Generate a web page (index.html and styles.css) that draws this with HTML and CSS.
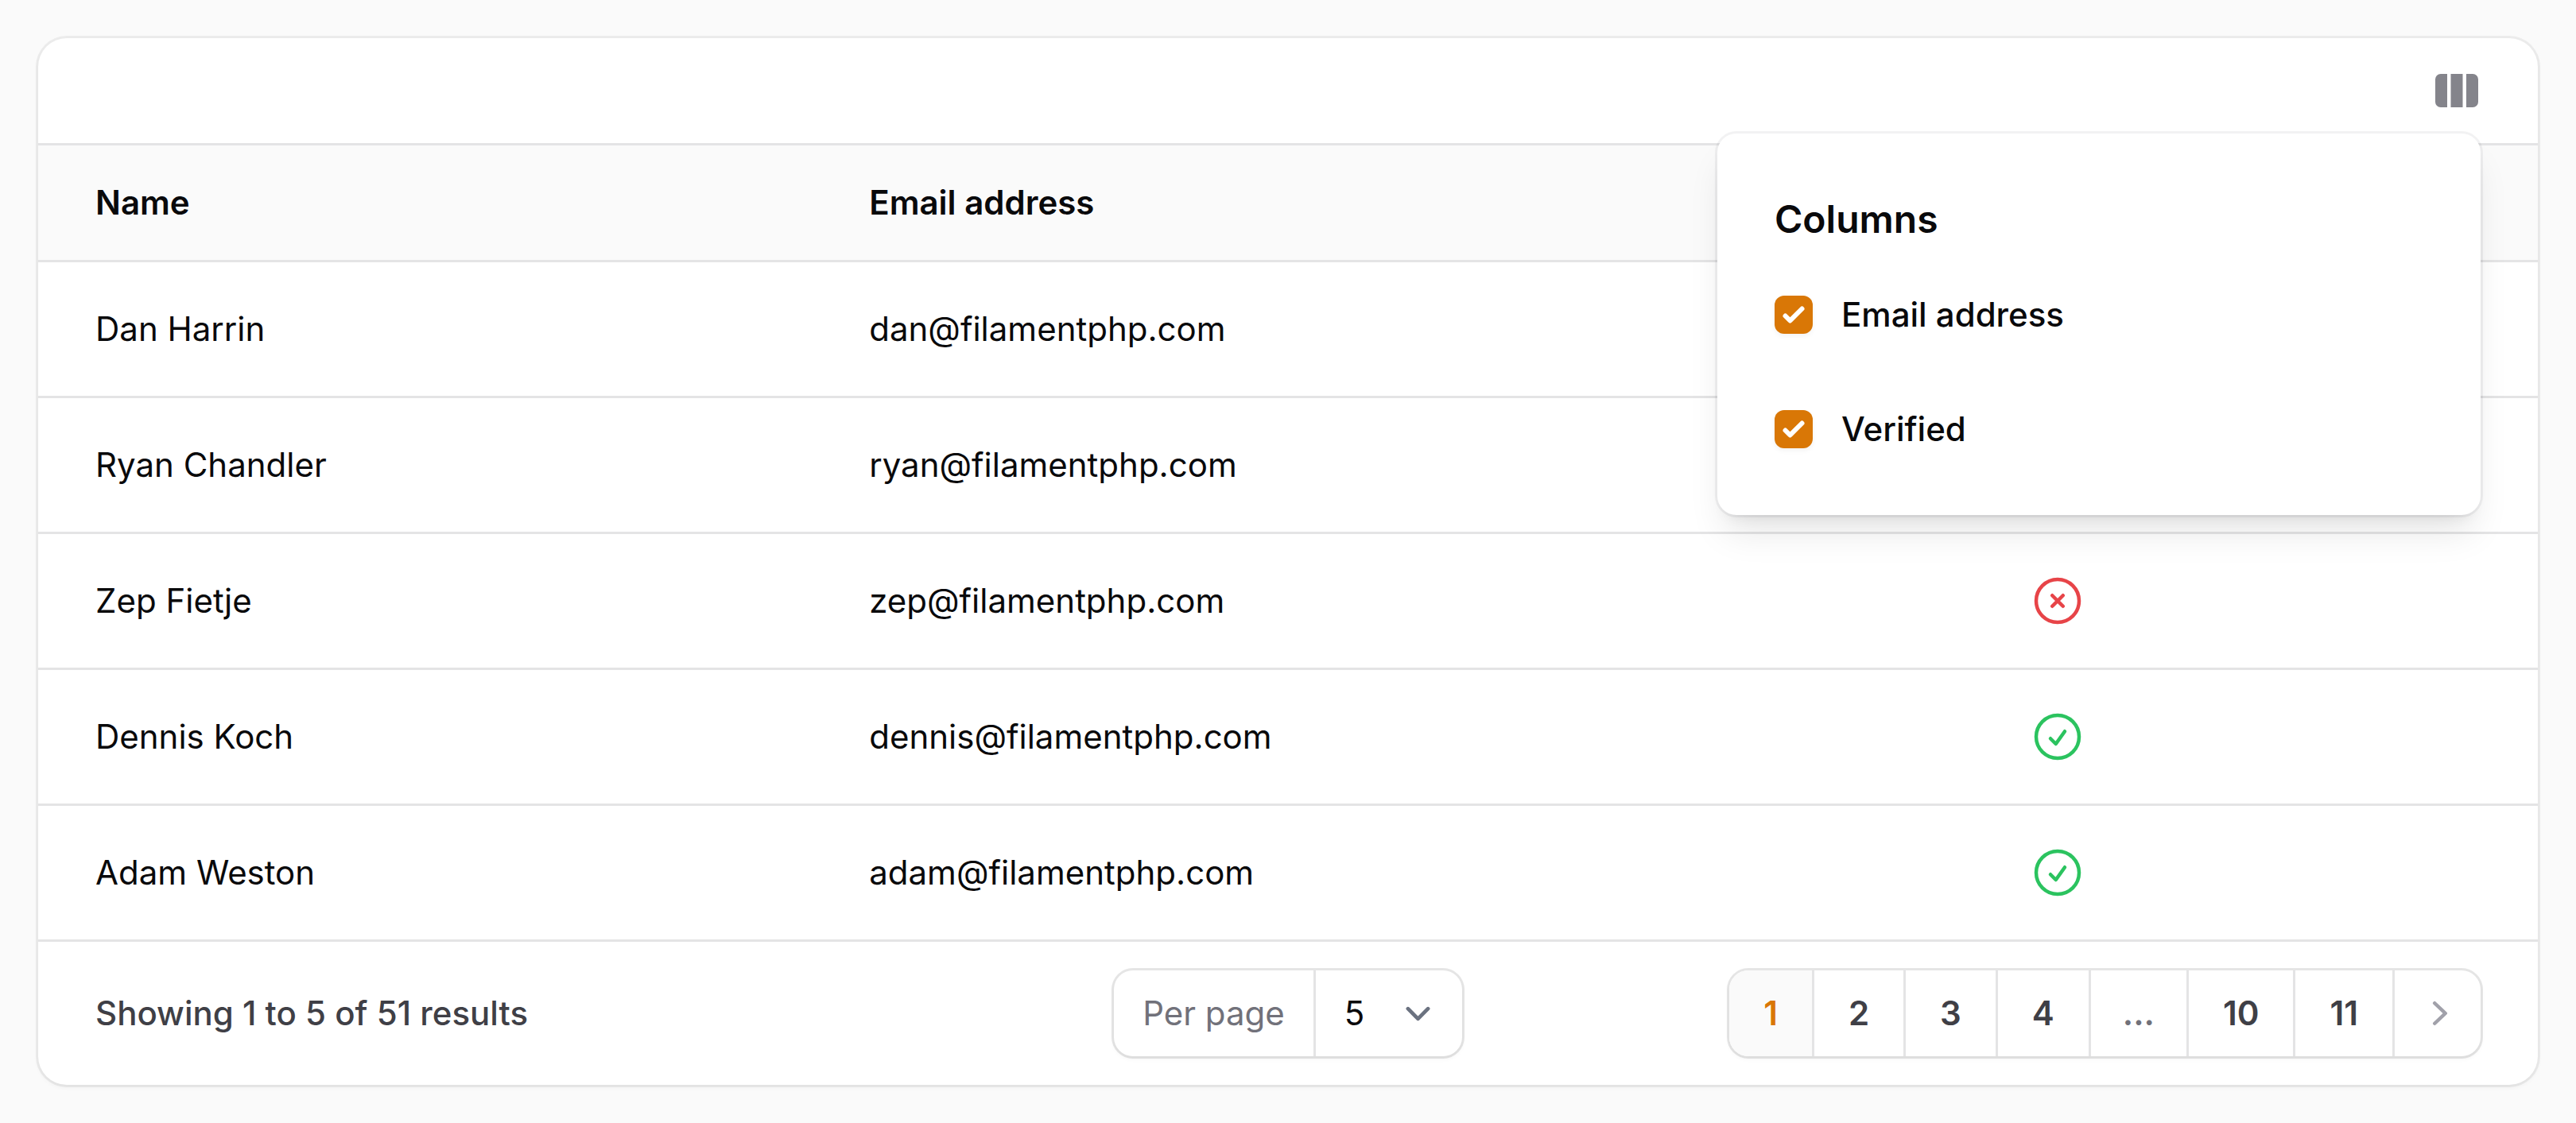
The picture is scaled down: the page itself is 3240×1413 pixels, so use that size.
FILE: index.html
```html
<!DOCTYPE html>
<html lang="en">
<head>
<meta charset="utf-8">
<meta name="viewport" content="width=device-width, initial-scale=1">
<title>Users</title>
<link rel="stylesheet" href="styles.css">
</head>
<body>
<svg class="sprite" aria-hidden="true">
  <symbol id="icon-check-circle" viewBox="0 0 24 24" fill="none" stroke="currentColor" stroke-width="1.5" stroke-linecap="round" stroke-linejoin="round">
    <path d="M9 12.75 11.25 15 15 9.75M21 12a9 9 0 1 1-18 0 9 9 0 0 1 18 0Z"/>
  </symbol>
  <symbol id="icon-x-circle" viewBox="0 0 24 24" fill="none" stroke="currentColor" stroke-width="1.5" stroke-linecap="round" stroke-linejoin="round">
    <path d="m9.75 9.75 4.5 4.5m0-4.5-4.5 4.5M21 12a9 9 0 1 1-18 0 9 9 0 0 1 18 0Z"/>
  </symbol>
</svg>

<main class="card">
  <div class="toolbar">
    <div class="dropdown">
      <button class="icon-button" type="button" aria-label="Toggle columns" aria-expanded="true">
        <svg viewBox="0 0 20 20" fill="currentColor" aria-hidden="true">
          <path d="M14 17h2.75A2.25 2.25 0 0 0 19 14.75v-9.5A2.25 2.25 0 0 0 16.75 3H14v14ZM12.5 3h-5v14h5V3ZM3.25 3H6v14H3.25A2.25 2.25 0 0 1 1 14.75v-9.5A2.25 2.25 0 0 1 3.25 3Z"/>
        </svg>
      </button>
      <div class="panel">
        <h2 class="panel-title">Columns</h2>
        <div class="panel-options">
          <label class="option"><input class="checkbox" type="checkbox" checked>Email address</label>
          <label class="option"><input class="checkbox" type="checkbox" checked>Verified</label>
        </div>
      </div>
    </div>
  </div>

  <table class="table">
    <thead>
      <tr><th class="col-name" scope="col">Name</th><th class="col-email" scope="col">Email address</th><th class="col-status" scope="col">Verified</th></tr>
    </thead>
    <tbody>
      <tr><td>Dan Harrin</td><td>dan@filamentphp.com</td><td class="col-status"><svg class="status yes" role="img" aria-label="Yes"><use href="#icon-check-circle"/></svg></td></tr>
      <tr><td>Ryan Chandler</td><td>ryan@filamentphp.com</td><td class="col-status"><svg class="status yes" role="img" aria-label="Yes"><use href="#icon-check-circle"/></svg></td></tr>
      <tr><td>Zep Fietje</td><td>zep@filamentphp.com</td><td class="col-status"><svg class="status no" role="img" aria-label="No"><use href="#icon-x-circle"/></svg></td></tr>
      <tr><td>Dennis Koch</td><td>dennis@filamentphp.com</td><td class="col-status"><svg class="status yes" role="img" aria-label="Yes"><use href="#icon-check-circle"/></svg></td></tr>
      <tr><td>Adam Weston</td><td>adam@filamentphp.com</td><td class="col-status"><svg class="status yes" role="img" aria-label="Yes"><use href="#icon-check-circle"/></svg></td></tr>
    </tbody>
  </table>

  <footer class="footer">
    <p class="summary">Showing 1 to 5 of 51 results</p>
    <div class="per-page">
      <label class="per-page-label" for="per-page">Per page</label>
      <select class="per-page-select" id="per-page">
        <option>5</option>
        <option>10</option>
        <option>25</option>
        <option>50</option>
      </select>
    </div>
    <nav class="pagination" aria-label="Pagination">
      <button class="page current" type="button" aria-current="page">1</button>
      <button class="page" type="button">2</button>
      <button class="page" type="button">3</button>
      <button class="page" type="button">4</button>
      <button class="page gap" type="button" disabled>...</button>
      <button class="page" type="button">10</button>
      <button class="page" type="button">11</button>
      <button class="page next" type="button" aria-label="Next">
        <svg viewBox="0 0 20 20" fill="currentColor" aria-hidden="true">
          <path d="M7.21 14.77a.75.75 0 0 1 .02-1.06L11.168 10 7.23 6.29a.75.75 0 1 1 1.04-1.08l4.5 4.25a.75.75 0 0 1 0 1.08l-4.5 4.25a.75.75 0 0 1-1.06-.02Z"/>
        </svg>
      </button>
    </nav>
  </footer>
</main>
</body>
</html>
```
FILE: styles.css
```css
:root {
  --ink: #09090b;
  --ink-soft: #3f3f46;
  --muted: #71717a;
  --line: #e4e4e5;
  --surface: #fafafa;
  --accent: #d97706;
  --ring: rgba(9, 9, 11, 0.1);
}

* {
  box-sizing: border-box;
}

body {
  margin: 0;
  padding: 48px;
  background: var(--surface);
  color: var(--ink);
  font-family: Inter, "Liberation Sans", sans-serif;
  font-size: 42px;
  line-height: 72px;
  font-optical-sizing: none;
  -webkit-font-smoothing: antialiased;
}

button,
select {
  margin: 0;
  border: 0;
  background: none;
  color: inherit;
  font: inherit;
  font-optical-sizing: none;
}

.sprite {
  position: absolute;
  width: 0;
  height: 0;
}

.card {
  border-radius: 36px;
  background: #fff;
  box-shadow: 0 0 0 3px rgba(9, 9, 11, 0.06), 0 3px 6px 0 rgba(0, 0, 0, 0.05);
}

/* Toolbar */

.toolbar {
  display: flex;
  justify-content: flex-end;
  padding: 36px 72px;
}

.dropdown {
  position: relative;
  height: 60px;
}

.icon-button {
  display: block;
  margin: -24px;
  padding: 24px;
  color: #84848b;
}

.icon-button svg,
.next svg {
  display: block;
  width: 60px;
  height: 60px;
}

.panel {
  position: absolute;
  top: 84px;
  right: 0;
  z-index: 1;
  width: 960px;
  padding: 72px;
  border-radius: 24px;
  background: #fff;
  box-shadow: 0 0 0 3px rgba(9, 9, 11, 0.05), 0 30px 45px -9px rgba(0, 0, 0, 0.1), 0 12px 18px -12px rgba(0, 0, 0, 0.1);
}

.panel-title {
  margin: 0 0 48px;
  font-size: 48px;
  font-weight: 600;
}

.panel-options {
  display: grid;
  gap: 72px;
}

.option {
  display: flex;
  align-items: center;
  gap: 36px;
  font-weight: 500;
}

.checkbox {
  appearance: none;
  width: 48px;
  height: 48px;
  margin: 0;
  border-radius: 12px;
  background-color: #fff;
  box-shadow: 0 0 0 3px var(--ring);
}

.checkbox:checked {
  background: var(--accent) url("data:image/svg+xml,%3Csvg viewBox='0 0 16 16' fill='white' xmlns='http://www.w3.org/2000/svg'%3E%3Cpath d='M12.207 4.793a1 1 0 0 1 0 1.414l-5 5a1 1 0 0 1-1.414 0l-2-2a1 1 0 0 1 1.414-1.414L6.5 9.086l4.293-4.293a1 1 0 0 1 1.414 0z'/%3E%3C/svg%3E") center / 100% no-repeat;
  box-shadow: 0 3px 6px 0 rgba(0, 0, 0, 0.05);
}

/* Table */

.table {
  width: 100%;
  border-collapse: separate;
  border-spacing: 0;
  border-top: 3px solid var(--line);
  table-layout: fixed;
}

.table th,
.table td {
  padding: 48px 36px;
  border-bottom: 3px solid var(--line);
  text-align: left;
}

.table th {
  padding-block: 36px;
  background: var(--surface);
  font-weight: 600;
}

.table th:first-child,
.table td:first-child {
  padding-left: 72px;
}

.table th:last-child,
.table td:last-child {
  padding-right: 72px;
}

.col-name {
  width: 32.1%;
}

.col-email {
  width: 30.6%;
}

.table .col-status {
  text-align: center;
}

.status {
  display: block;
  width: 72px;
  height: 72px;
  margin: 0 auto;
}

.yes {
  color: #2bc35f;
}

.no {
  color: #e74448;
}

/* Footer */

.footer {
  display: grid;
  grid-template-columns: 1fr auto 1fr;
  align-items: center;
  padding: 36px 72px;
}

.summary {
  margin: 0;
  color: var(--ink-soft);
  font-weight: 500;
}

.per-page,
.pagination {
  display: flex;
  border-radius: 24px;
  box-shadow: 0 0 0 3px var(--ring), 0 3px 6px 0 rgba(0, 0, 0, 0.05);
}

.per-page-label {
  padding: 18px 36px;
  border-right: 3px solid var(--line);
  color: var(--muted);
}

.per-page-select {
  appearance: none;
  width: 184px;
  padding: 18px 36px;
  background: url("data:image/svg+xml,%3Csvg xmlns='http://www.w3.org/2000/svg' fill='none' viewBox='0 0 20 20'%3E%3Cpath stroke='%236b7280' stroke-linecap='round' stroke-linejoin='round' stroke-width='1.5' d='m6 8 4 4 4-4'/%3E%3C/svg%3E") right 24px center / 63px no-repeat;
}

.pagination {
  justify-self: end;
}

.page {
  padding: 18px 43px;
  border-left: 3px solid var(--line);
  color: var(--ink-soft);
  font-weight: 600;
}

.page.current {
  border-left: 0;
  border-radius: 24px 0 0 24px;
  background: var(--surface);
  color: var(--accent);
}

.page.gap {
  padding-inline: 40px;
  color: var(--muted);
}

.page.next {
  padding: 24px 21px 24px 27px;
  color: #a1a1aa;
}
```
